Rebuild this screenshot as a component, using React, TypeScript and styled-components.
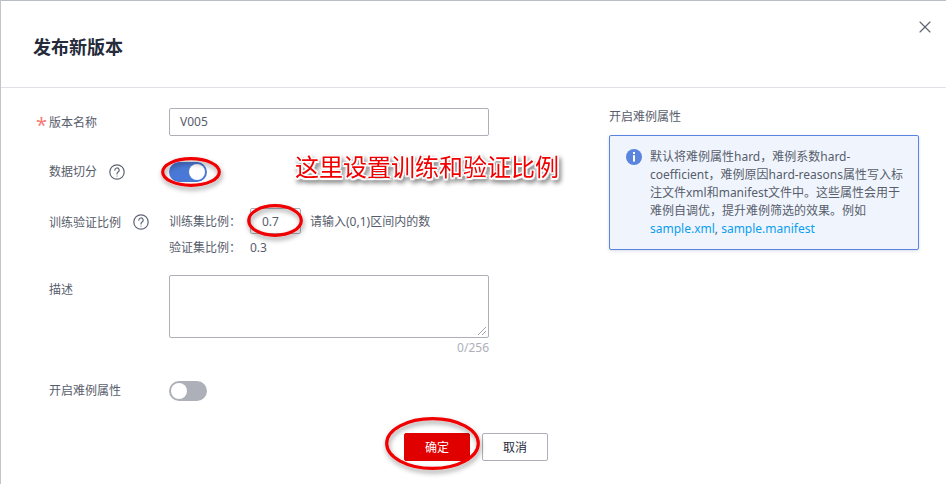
import React from "react";
import styled, { createGlobalStyle } from "styled-components";
import { X } from "lucide-react";

const Global = createGlobalStyle`
  html, body { margin: 0; padding: 0; background: #fff; }
  body { font-family: "Noto Sans", "Noto Sans CJK SC", "Liberation Sans", sans-serif; }
  * { box-sizing: border-box; }
`;

const Dialog = styled.div`
  position: relative;
  width: 946px;
  height: 484px;
  overflow: hidden;
  background: #fff;
  border-top: 1px solid #b9bec9;
  border-left: 1px solid #c4c4c6;
  color: #575d6c;
  font-size: 12px;
`;
const Header = styled.header`
  height: 87px;
  border-bottom: 1px solid #dfe1e6;
  padding: 32px 0 0 32px;
`;
const Title = styled.h1`
  margin: 0;
  font-size: 18px;
  line-height: 26px;
  font-weight: 700;
  color: #252b3a;
  font-family: "Noto Sans CJK SC", sans-serif;
`;
const Close = styled.button`
  position: absolute;
  top: 16px;
  right: 11px;
  border: 0;
  padding: 0;
  display: flex;
  background: none;
  color: #5e6472;
`;
const Body = styled.div`
  display: flex;
  padding-top: 20px;
`;
const Form = styled.div`
  width: 608px;
  display: flex;
  flex-direction: column;
`;
const Row = styled.div<{ $h: number; $mb?: number }>`
  display: flex;
  min-height: ${(p) => p.$h}px;
  margin-bottom: ${(p) => p.$mb ?? 0}px;
`;
const Label = styled.label<{ $center?: boolean }>`
  width: 168px;
  height: ${(p) => (p.$center ? "20px" : "28px")};
  padding-left: 35px;
  display: flex;
  align-items: ${(p) => (p.$center ? "center" : "flex-start")};
  line-height: ${(p) => (p.$center ? "20px" : "29px")};
  white-space: nowrap;
`;
const Req = styled.span`
  color: #f77b76;
  font-size: 20px;
  line-height: 34px;
  width: 12px;
  margin-right: 1px;
`;
const LabelText = styled.span<{ $indent?: boolean }>`
  margin-left: ${(p) => (p.$indent ? "13px" : "0")};
`;
const Help = styled.span<{ $gap: number; $top?: number }>`
  margin-left: ${(p) => p.$gap}px;
  margin-top: ${(p) => p.$top ?? 0}px;
  display: flex;
  color: #5e6472;
`;
const Field = styled.div`
  width: 320px;
`;
const TextInput = styled.div`
  height: 28px;
  width: 320px;
  border: 1px solid #adb0b8;
  border-radius: 2px;
  padding: 0 10px;
  line-height: 26px;
  color: #575d6c;
`;
const Toggle = styled.div<{ $on?: boolean }>`
  width: 38px;
  height: 20px;
  border-radius: 10px;
  background: ${(p) => (p.$on ? "#4a78d6" : "#adb0b8")};
  padding: 2px;
  display: flex;
  justify-content: ${(p) => (p.$on ? "flex-end" : "flex-start")};
  &::after {
    content: "";
    width: 16px;
    height: 16px;
    border-radius: 50%;
    background: #fff;
  }
`;
const RatioRow = styled.div`
  display: flex;
  align-items: center;
  height: 26px;
  white-space: nowrap;
`;
const RatioLabel = styled.span`
  width: 81px;
`;
const RatioInput = styled.div`
  width: 51px;
  height: 26px;
  border: 1px solid #adb0b8;
  border-radius: 2px;
  padding-left: 11px;
  line-height: 26px;
  margin-right: 9px;
  color: #575d6c;
`;
const TextArea = styled.div`
  height: 63px;
  width: 320px;
  border: 1px solid #adb0b8;
  border-radius: 2px;
  position: relative;
`;
const Grip = styled.svg`
  position: absolute;
  right: 1px;
  bottom: 1px;
`;
const Counter = styled.div`
  text-align: right;
  color: #adb0b8;
  line-height: 20px;
`;
const Footer = styled.div`
  display: flex;
  gap: 12px;
  margin: 32px 0 0 403px;
`;
const Btn = styled.button<{ $primary?: boolean }>`
  width: 66px;
  height: 28px;
  border-radius: 2px;
  padding: 0;
  font: inherit;
  font-size: 12px;
  border: 1px solid ${(p) => (p.$primary ? "#e00000" : "#adb0b8")};
  background: ${(p) => (p.$primary ? "#e00000" : "#fff")};
  color: ${(p) => (p.$primary ? "#fff" : "#252b3a")};
`;
const Side = styled.aside`
  width: 310px;
`;
const SideTitle = styled.div`
  line-height: 18px;
  color: #575d6c;
  margin-bottom: 9px;
`;
const Note = styled.div`
  height: 115px;
  display: flex;
  background: #f0f5fd;
  border: 1px solid #5a84dd;
  border-radius: 2px;
  padding: 12px 16px;
  box-shadow: 0 1px 3px rgba(90, 110, 160, 0.25);
`;
const InfoIcon = styled.svg`
  flex: none;
  margin: 1px 8px 0 0;
`;
const NoteText = styled.p`
  margin: 0;
  width: 255px;
  flex: none;
  line-height: 18px;
  color: #575d6c;
`;
const Link = styled.a`
  color: #0a9eef;
  text-decoration: none;
`;
const Ellipse = styled.svg<{ $l: number; $t: number }>`
  position: absolute;
  left: ${(p) => p.$l}px;
  top: ${(p) => p.$t}px;
  overflow: visible;
  pointer-events: none;
`;
const Annotation = styled.div`
  position: absolute;
  left: 294px;
  top: 149px;
  font-family: "Noto Sans CJK SC", serif;
  font-size: 24px;
  line-height: 32px;
  white-space: nowrap;
  color: #f00000;
  filter: drop-shadow(2px 3px 2px rgba(0, 0, 0, 0.45));
  text-shadow: 1.5px 0 0 #fff, -1.5px 0 0 #fff, 0 1.5px 0 #fff, 0 -1.5px 0 #fff, 1.5px 1.5px 1px #fff, -1.5px -1.5px 1px #fff, 1.5px -1.5px 1px #fff, -1.5px 1.5px 1px #fff;
`;

const HelpIcon = () => (
  <svg width="16" height="16" viewBox="0 0 16 16" fill="none" stroke="currentColor" strokeWidth="1.2">
    <circle cx="8" cy="8" r="7.2" />
    <path d="M5.8 6.2a2.2 2.2 0 1 1 3.3 1.9c-.7.4-1.1.8-1.1 1.6v.3" strokeLinecap="round" />
    <circle cx="8" cy="12" r=".6" fill="currentColor" stroke="none" />
  </svg>
);

const Mark = ({ l, t, w, h }: { l: number; t: number; w: number; h: number }) => (
  <Ellipse $l={l} $t={t} width={w} height={h}>
    <defs>
      <filter id={`s${l}`} x="-20%" y="-30%" width="140%" height="170%">
        <feDropShadow dx="1" dy="3" stdDeviation="2.5" floodColor="#000" floodOpacity="0.4" />
      </filter>
    </defs>
    <ellipse cx={w / 2} cy={h / 2} rx={w / 2 - 1.7} ry={h / 2 - 1.7} fill="none" stroke="#f00000" strokeWidth="3.2" filter={`url(#s${l})`} />
  </Ellipse>
);

export default function App() {
  return (
    <Dialog>
      <Global />
      <Header>
        <Title>发布新版本</Title>
      </Header>
      <Close aria-label="关闭">
        <X size={20} strokeWidth={1.4} />
      </Close>
      <Body>
        <Form>
          <Row $h={28} $mb={26}>
            <Label>
              <Req>*</Req>
              <LabelText>版本名称</LabelText>
            </Label>
            <Field>
              <TextInput>V005</TextInput>
            </Field>
          </Row>
          <Row $h={20} $mb={26}>
            <Label $center>
              <LabelText $indent>数据切分</LabelText>
              <Help $gap={12}><HelpIcon /></Help>
            </Label>
            <Field>
              <Toggle $on />
            </Field>
          </Row>
          <Row $h={52} $mb={15}>
            <Label>
              <LabelText $indent>训练验证比例</LabelText>
              <Help $gap={12} $top={6}><HelpIcon /></Help>
            </Label>
            <Field>
              <RatioRow>
                <RatioLabel>训练集比例：</RatioLabel>
                <RatioInput>0.7</RatioInput>
                请输入(0,1)区间内的数
              </RatioRow>
              <RatioRow>
                <RatioLabel>验证集比例：</RatioLabel>
                0.3
              </RatioRow>
            </Field>
          </Row>
          <Row $h={83} $mb={23}>
            <Label>
              <LabelText $indent>描述</LabelText>
            </Label>
            <Field>
              <TextArea>
                <Grip width="10" height="10" viewBox="0 0 10 10" stroke="#8a8e99" strokeWidth="0.8">
                  <path d="M1 9 9 1M5 9 9 5" />
                </Grip>
              </TextArea>
              <Counter>0/256</Counter>
            </Field>
          </Row>
          <Row $h={20}>
            <Label $center>
              <LabelText $indent>开启难例属性</LabelText>
            </Label>
            <Field>
              <Toggle />
            </Field>
          </Row>
          <Footer>
            <Btn $primary>确定</Btn>
            <Btn>取消</Btn>
          </Footer>
        </Form>
        <Side>
          <SideTitle>开启难例属性</SideTitle>
          <Note>
            <InfoIcon width="16" height="16" viewBox="0 0 16 16">
              <circle cx="8" cy="8" r="8" fill="#5a84dd" />
              <rect x="7" y="3" width="2" height="2" fill="#fff" />
              <rect x="7" y="6.2" width="2" height="6.4" fill="#fff" />
            </InfoIcon>
            <NoteText>
              默认将难例属性hard，难例系数hard-coefficient，难例原因hard-reasons属性写入标注文件xml和manifest文件中。这些属性会用于难例自调优，提升难例筛选的效果。例如
              <br />
              <Link>sample.xml</Link>, <Link>sample.manifest</Link>
            </NoteText>
          </Note>
        </Side>
      </Body>
      <Annotation>这里设置训练和验证比例</Annotation>
      <Mark l={160} t={156} w={60} h={30} />
      <Mark l={246} t={203} w={56} h={33} />
      <Mark l={384} t={416} w={95} h={53} />
    </Dialog>
  );
}
